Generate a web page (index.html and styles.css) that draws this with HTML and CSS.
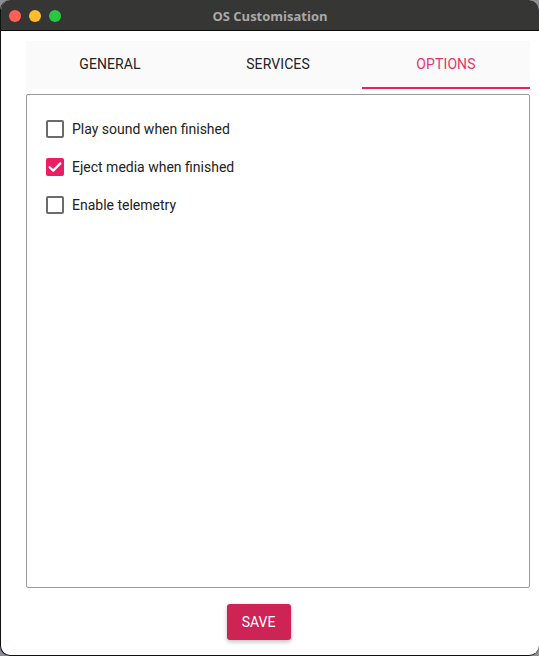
FILE: index.html
```html
<!DOCTYPE html>
<html>
<head>
<meta charset="utf-8">
<link rel="stylesheet" href="styles.css">
</head>
<body>
<div class="window">
  <div class="titlebar">
    <div class="lights">
      <span class="light red"></span>
      <span class="light yellow"></span>
      <span class="light green"></span>
    </div>
    <div class="title">OS Customisation</div>
  </div>
  <div class="content">
    <div class="tabs">
      <div class="tab">GENERAL</div>
      <div class="tab">SERVICES</div>
      <div class="tab active">OPTIONS</div>
    </div>
    <div class="panel">
      <label class="option"><span class="box"></span><span>Play sound when finished</span></label>
      <label class="option"><span class="box checked"><svg viewBox="0 0 18 18" width="18" height="18"><path d="M3.6 9.2 L7.2 12.6 L14.4 5.4" fill="none" stroke="#fff" stroke-width="2.2" stroke-linecap="round" stroke-linejoin="round"/></svg></span><span>Eject media when finished</span></label>
      <label class="option"><span class="box"></span><span>Enable telemetry</span></label>
    </div>
    <div class="actions">
      <button class="save">SAVE</button>
    </div>
  </div>
</div>
</body>
</html>
```
FILE: styles.css
```css
html, body {
  margin: 0;
  padding: 0;
  background: #8a8f96;
}
body {
  width: 539px;
  height: 656px;
  overflow: hidden;
  font-family: Roboto, "Noto Sans", sans-serif;
}
.window {
  width: 539px;
  height: 656px;
  background: #fff;
  border-radius: 10px;
  overflow: hidden;
  box-sizing: border-box;
  border-left: 1px solid #111;
  border-bottom: 1px solid #111;
  display: flex;
  flex-direction: column;
}
.titlebar {
  height: 30px;
  background: #363634;
  border-bottom: 1px solid #0c0c0c;
  position: relative;
  display: flex;
  align-items: center;
  justify-content: center;
  flex-shrink: 0;
}
.lights {
  position: absolute;
  left: 8px;
  top: 10px;
  display: flex;
  gap: 8px;
}
.light {
  width: 12px;
  height: 12px;
  border-radius: 50%;
}
.red { background: #fe5f57; }
.yellow { background: #febc2e; }
.green { background: #28c840; }
.title {
  color: #a9a9a9;
  font-family: "Open Sans", Inter, sans-serif;
  font-weight: 700;
  font-size: 13px;
  margin-top: 1px;
}
.content {
  flex: 1;
  padding: 10px 8px 0 25px;
  display: flex;
  flex-direction: column;
}
.tabs {
  width: 504px;
  height: 48px;
  background: #fafafa;
  display: flex;
}
.tab {
  flex: 1;
  display: flex;
  align-items: center;
  justify-content: center;
  font-size: 14px;
  color: #222;
  letter-spacing: 0.1px;
  box-sizing: border-box;
  margin-bottom: 2px;
}
.tab.active {
  color: #e8336b;
  border-bottom: 2px solid #e91e63;
  margin-bottom: 0;
}
.panel {
  margin-top: 5px;
  width: 504px;
  height: 494px;
  box-sizing: border-box;
  border: 1px solid #9a9a9a;
  border-radius: 2px;
  padding: 25px 0 0 19px;
  display: flex;
  flex-direction: column;
  gap: 20px;
}
.option {
  display: flex;
  align-items: center;
  gap: 8px;
  font-size: 14px;
  color: #222;
  height: 18px;
}
.box {
  width: 18px;
  height: 18px;
  box-sizing: border-box;
  border: 2px solid #6b6b6b;
  border-radius: 2px;
  display: flex;
}
.box.checked {
  background: #e91e63;
  border: none;
}
.actions {
  display: flex;
  justify-content: center;
  padding-top: 16px;
  padding-right: 40px;
}
.save {
  width: 64px;
  height: 36px;
  border: none;
  border-radius: 3px;
  background: #cd2355;
  color: #fff;
  font-family: Roboto, sans-serif;
  font-size: 14px;
  box-shadow: 0 2px 4px rgba(0,0,0,0.25);
}
```
